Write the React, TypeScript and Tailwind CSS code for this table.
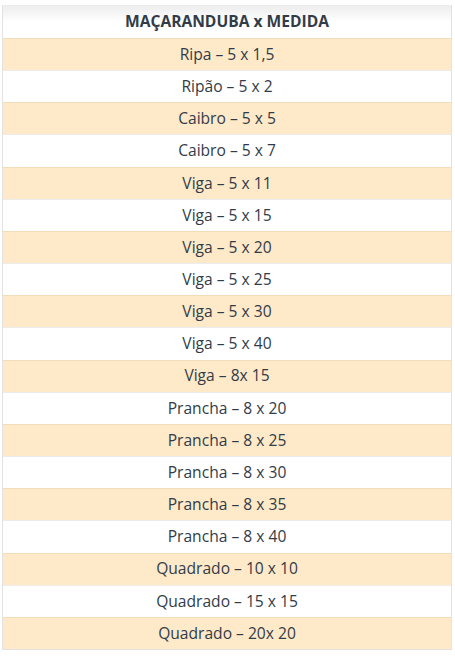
import React from "react";

const rows = [
  "Ripa – 5 x 1,5",
  "Ripão – 5 x 2",
  "Caibro – 5 x 5",
  "Caibro – 5 x 7",
  "Viga – 5 x 11",
  "Viga – 5 x 15",
  "Viga – 5 x 20",
  "Viga – 5 x 25",
  "Viga – 5 x 30",
  "Viga – 5 x 40",
  "Viga – 8x 15",
  "Prancha – 8 x 20",
  "Prancha – 8 x 25",
  "Prancha – 8 x 30",
  "Prancha – 8 x 35",
  "Prancha – 8 x 40",
  "Quadrado – 10 x 10",
  "Quadrado – 15 x 15",
  "Quadrado – 20x 20",
];

export default function App() {
  return (
    <div
      className="w-[455px] h-[656px] bg-white pt-[5px] pl-[2px]"
      style={{ fontFamily: '"Open Sans", "Noto Sans", sans-serif' }}
    >
      <div className="w-[450px] border-l border-r border-b border-[#e2e2e2] text-[15.6px] text-[#323c48]">
        <div className="h-[33px] flex items-center justify-center font-bold bg-gradient-to-b from-[#ececec] via-white to-white">
          MAÇARANDUBA x MEDIDA
        </div>
        {rows.map((r, i) => (
          <div
            key={i}
            className={
              "h-[32.17px] box-border border-t flex items-center justify-center " +
              (i % 2 === 0
                ? "bg-[#fee9c8] border-[#f3dcb8]"
                : "bg-white border-[#ececec]")
            }
          >
            {r}
          </div>
        ))}
      </div>
    </div>
  );
}
